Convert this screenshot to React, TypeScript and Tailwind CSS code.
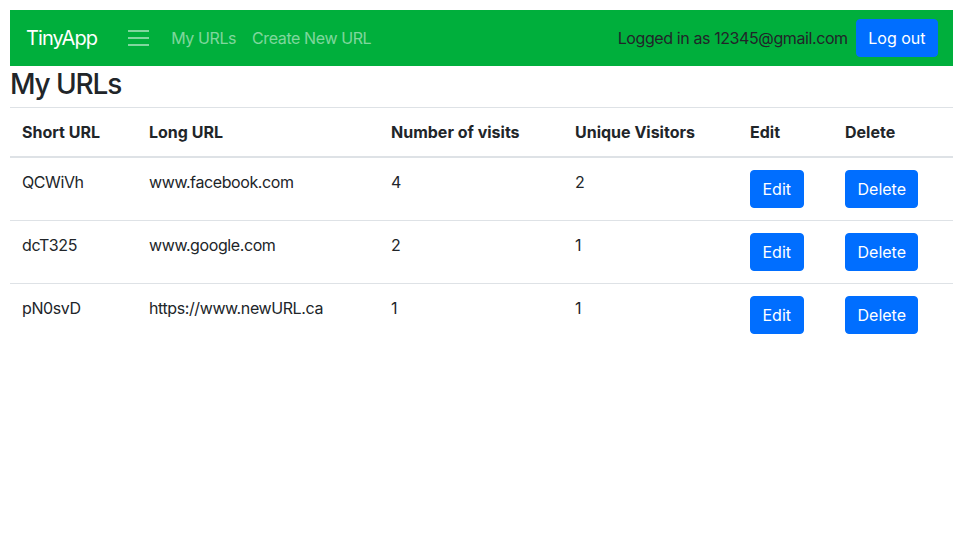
const urls = [
  { short: 'QCWiVh', long: 'www.facebook.com', visits: 4, unique: 2 },
  { short: 'dcT325', long: 'www.google.com', visits: 2, unique: 1 },
  { short: 'pN0svD', long: 'https://www.newURL.ca', visits: 1, unique: 1 },
];

function Button({ children }: { children: React.ReactNode }) {
  return (
    <button className="rounded-[4px] border border-[#006eff] bg-[#006eff] px-[11.5px] py-1.5 text-base leading-6 tracking-normal text-white">
      {children}
    </button>
  );
}

const th = 'border-t border-b-2 border-[#dee2e6] p-3 font-bold tracking-normal';
const td = 'border-t border-[#dee2e6] p-3 align-top';

export default function App() {
  return (
    <div
      className="min-h-[560px] bg-white p-[10px] tracking-[-0.025em] text-[#212529]"
      style={{ fontFamily: 'Inter, "Liberation Sans", sans-serif' }}
    >
      {/* navbar */}
      <nav className="flex h-14 items-center bg-[#00af3c] pl-4 pr-[15px]">
        <span className="mr-[27px] text-xl leading-[30px] tracking-[-0.045em] text-white">TinyApp</span>
        <svg width="30" height="30" viewBox="0 0 30 30" className="mr-[17px]">
          <path
            stroke="rgba(255,255,255,0.5)"
            strokeWidth="2"
            d="M4 8h21M4 15h21M4 22h21"
          />
        </svg>
        <a className="mr-4 text-base text-white/50">My URLs</a>
        <a className="text-base text-white/50">Create New URL</a>
        <div className="ml-auto flex items-center gap-2">
          <span className="text-base text-[#212529]">Logged in as 12345@gmail.com</span>
          <Button>Log out</Button>
        </div>
      </nav>

      <h3 className="mt-[2px] text-[28px] font-medium leading-[1.2] tracking-[-0.04em]">My URLs</h3>

      <table className="mt-[5px] w-full border-collapse text-base leading-6">
        <thead>
          <tr className="text-left">
            <th className={`w-[127px] ${th}`}>Short URL</th>
            <th className={`w-[242px] ${th}`}>Long URL</th>
            <th className={`w-[184px] ${th}`}>Number of visits</th>
            <th className={`w-[175px] ${th}`}>Unique Visitors</th>
            <th className={`w-[95px] ${th}`}>Edit</th>
            <th className={th}>Delete</th>
          </tr>
        </thead>
        <tbody>
          {urls.map((u) => (
            <tr key={u.short}>
              <td className={td}>{u.short}</td>
              <td className={td}>{u.long}</td>
              <td className={td}>{u.visits}</td>
              <td className={td}>{u.unique}</td>
              <td className={td}>
                <Button>Edit</Button>
              </td>
              <td className={td}>
                <Button>Delete</Button>
              </td>
            </tr>
          ))}
        </tbody>
      </table>
    </div>
  );
}
